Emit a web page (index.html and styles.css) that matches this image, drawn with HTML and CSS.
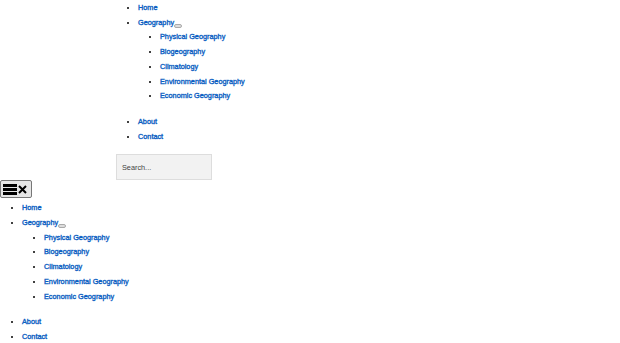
FILE: index.html
```html
<!DOCTYPE html>
<html lang="en">
<head>
<meta charset="utf-8">
<title>Geography</title>
<link rel="stylesheet" href="styles.css">
</head>
<body>
<header class="site-header">
  <nav class="main-nav">
    <ul class="menu">
      <li><a href="#">Home</a></li>
      <li><a href="#">Geography</a><button class="sub-toggle" aria-label="Toggle submenu"></button>
        <ul class="sub-menu">
          <li><a href="#">Physical Geography</a></li>
          <li><a href="#">Biogeography</a></li>
          <li><a href="#">Climatology</a></li>
          <li><a href="#">Environmental Geography</a></li>
          <li><a href="#">Economic Geography</a></li>
        </ul>
      </li>
      <li><a href="#">About</a></li>
      <li><a href="#">Contact</a></li>
    </ul>
    <input class="search" type="text" placeholder="Search...">
  </nav>
</header>
<button class="menu-toggle" aria-label="Menu"><span class="bars"><span></span><span></span><span></span></span><svg class="close" width="9" height="9" viewBox="0 0 9 9"><path d="M1 1 L8 8 M8 1 L1 8" stroke="#000" stroke-width="2" fill="none"/></svg></button>
<nav class="mobile-nav">
  <ul class="menu mobile">
    <li><a href="#">Home</a></li>
    <li><a href="#">Geography</a><button class="sub-toggle" aria-label="Toggle submenu"></button>
      <ul class="sub-menu">
        <li><a href="#">Physical Geography</a></li>
        <li><a href="#">Biogeography</a></li>
        <li><a href="#">Climatology</a></li>
        <li><a href="#">Environmental Geography</a></li>
        <li><a href="#">Economic Geography</a></li>
      </ul>
    </li>
    <li><a href="#">About</a></li>
    <li><a href="#">Contact</a></li>
  </ul>
</nav>
</body>
</html>
```
FILE: styles.css
```css
body {
  margin: 0;
  font-family: "Liberation Sans", Arial, sans-serif;
  font-size: 7.3px;
  background: #fff;
  color: #000;
}
.main-nav {
  padding-top: 1px;
  padding-left: 116px;
}
.menu {
  margin: 0;
  padding-left: 22px;
  list-style: disc;
  font-size: 7.3px;
}
.menu li {
  line-height: 14.7px;
}
.menu a {
  color: #0a5ec2;
  text-decoration: none;
  font-weight: normal;
  -webkit-text-stroke: 0.35px #0a5ec2;
}
.sub-menu {
  margin: 0 0 11px 0;
  padding-left: 22px;
  list-style: disc;
}
.sub-toggle {
  display: inline-block;
  width: 8px;
  height: 4px;
  padding: 0;
  margin: 0;
  border: 1px solid #aaa;
  border-radius: 2px;
  background: #ddd;
  vertical-align: -2px;
}
.search {
  display: block;
  box-sizing: border-box;
  width: 96px;
  height: 26px;
  margin: 10px 0 0 0;
  padding: 0 5px;
  border: 1px solid #ddd;
  background: #f2f2f2;
  font-family: "Liberation Sans", Arial, sans-serif;
  font-size: 7.3px;
  color: #333;
}
.search::placeholder {
  color: #444;
}
.menu-toggle {
  display: flex;
  align-items: center;
  gap: 1px;
  box-sizing: border-box;
  width: 32px;
  height: 18px;
  margin: 0;
  padding: 0 2px;
  border: 1px solid #777;
  border-radius: 2px;
  background: #e6e6e6;
}
.bars {
  display: flex;
  flex-direction: column;
  gap: 1.5px;
  width: 14px;
}
.bars span {
  display: block;
  height: 2.5px;
  background: #000;
}
.close {
  display: block;
}
.mobile-nav {
  padding-top: 3px;
}
```
